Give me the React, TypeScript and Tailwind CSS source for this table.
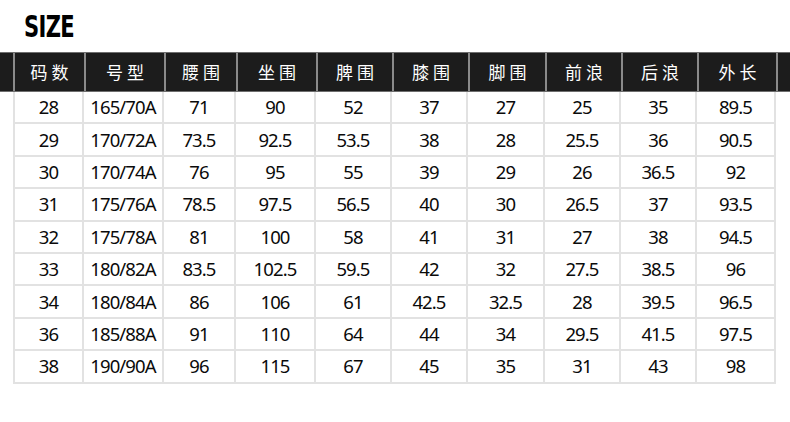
import React from "react";

const headers = ["码数", "号型", "腰围", "坐围", "脾围", "膝围", "脚围", "前浪", "后浪", "外长"];
const rows = [
  ["28", "165/70A", "71", "90", "52", "37", "27", "25", "35", "89.5"],
  ["29", "170/72A", "73.5", "92.5", "53.5", "38", "28", "25.5", "36", "90.5"],
  ["30", "170/74A", "76", "95", "55", "39", "29", "26", "36.5", "92"],
  ["31", "175/76A", "78.5", "97.5", "56.5", "40", "30", "26.5", "37", "93.5"],
  ["32", "175/78A", "81", "100", "58", "41", "31", "27", "38", "94.5"],
  ["33", "180/82A", "83.5", "102.5", "59.5", "42", "32", "27.5", "38.5", "96"],
  ["34", "180/84A", "86", "106", "61", "42.5", "32.5", "28", "39.5", "96.5"],
  ["36", "185/88A", "91", "110", "64", "44", "34", "29.5", "41.5", "97.5"],
  ["38", "190/90A", "96", "115", "67", "45", "35", "31", "43", "98"],
];

const cols = "grid grid-cols-[71px_80px_72px_80px_76px_76px_77px_76px_76px_79px]";

export default function App() {
  return (
    <div className="w-[790px] h-[422px] bg-white overflow-hidden" style={{ fontFamily: "'Noto Sans','Noto Sans CJK SC',sans-serif" }}>
      <div className="h-[52px] pl-[24px] pt-[8px]">
        <span
          className="inline-block origin-left scale-x-[0.68] text-[31px] leading-[36px] font-bold text-black tracking-[-1px]"
          style={{ fontFamily: "'DejaVu Sans',sans-serif" }}
        >
          SIZE
        </span>
      </div>
      <div className="flex h-[40px] bg-[#1c1c1c] border-y border-[#6e6e6e]">
        <div className="w-[13px] shrink-0" />
        <div className={cols}>
          {headers.map((h) => (
            <div
              key={h}
              className="border-l-2 border-[#8a8a8a] flex items-center justify-center text-white text-[17px] tracking-[4px] pl-[4px]"
              style={{ fontFamily: "'Noto Sans CJK SC',sans-serif" }}
            >
              {h}
            </div>
          ))}
        </div>
        <div className="flex-1 border-l-2 border-[#8a8a8a]" />
      </div>
      <div className="pl-[13px]">
        <div className={cols}>
          {rows.map((r, ri) =>
            r.map((c, ci) => (
              <div
                key={ri + "-" + ci}
                className={
                  "h-[32.4px] flex items-center justify-center text-[18.5px] tracking-[-0.9px] text-[#0a0a0a] border-b-2 border-r-2 border-[#e2e2e2] " +
                  (ci === 0 ? "border-l-2" : "")
                }
              >
                {c}
              </div>
            ))
          )}
        </div>
      </div>
    </div>
  );
}
